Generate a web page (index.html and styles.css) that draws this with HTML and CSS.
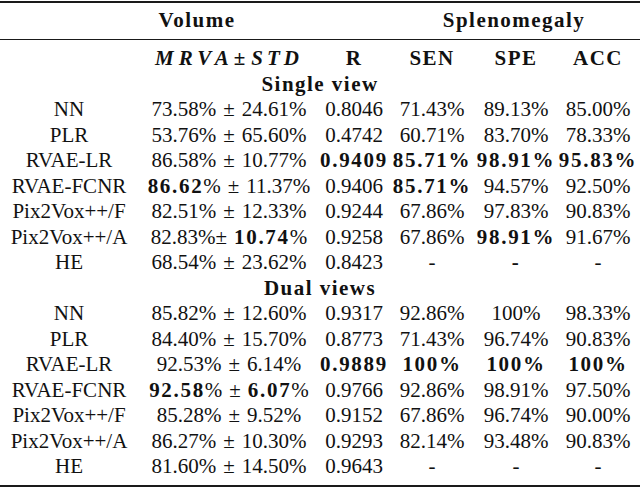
FILE: index.html
```html
<!DOCTYPE html>
<html lang="en">
<head>
<meta charset="utf-8">
<title>Volume and Splenomegaly results</title>
<link rel="stylesheet" href="styles.css">
</head>
<body>
<table class="results">
  <colgroup>
    <col class="c-method">
    <col class="c-vol">
    <col class="c-r">
    <col class="c-sen">
    <col class="c-spe">
    <col class="c-acc">
  </colgroup>
  <thead>
    <tr class="group">
      <th colspan="3" class="vol-head">Volume</th>
      <th colspan="3">Splenomegaly</th>
    </tr>
    <tr class="metrics">
      <th></th>
      <th class="mrva"><span class="mi1">MRVA</span><span class="pm">±</span><span class="mi2">STD</span></th>
      <th>R</th>
      <th>SEN</th>
      <th>SPE</th>
      <th>ACC</th>
    </tr>
  </thead>
  <tbody>
    <tr class="section"><th colspan="6">Single view</th></tr>
    <tr><td>NN</td><td>73.58%<span class="pm">±</span>24.61%</td><td>0.8046</td><td>71.43%</td><td>89.13%</td><td>85.00%</td></tr>
    <tr><td>PLR</td><td>53.76%<span class="pm">±</span>65.60%</td><td>0.4742</td><td>60.71%</td><td>83.70%</td><td>78.33%</td></tr>
    <tr><td>RVAE-LR</td><td>86.58%<span class="pm">±</span>10.77%</td><td><span class="b">0.9409</span></td><td><span class="b">85.71%</span></td><td><span class="b">98.91%</span></td><td><span class="b">95.83%</span></td></tr>
    <tr><td>RVAE-FCNR</td><td><span class="b">86.62</span>%<span class="pm">±</span>11.37%</td><td>0.9406</td><td><span class="b">85.71%</span></td><td>94.57%</td><td>92.50%</td></tr>
    <tr><td>Pix2Vox++/F</td><td>82.51%<span class="pm">±</span>12.33%</td><td>0.9244</td><td>67.86%</td><td>97.83%</td><td>90.83%</td></tr>
    <tr><td>Pix2Vox++/A</td><td>82.83%<span class="pm tight">±</span><span class="b">10.74</span>%</td><td>0.9258</td><td>67.86%</td><td><span class="b">98.91%</span></td><td>91.67%</td></tr>
    <tr><td>HE</td><td>68.54%<span class="pm">±</span>23.62%</td><td>0.8423</td><td>-</td><td><span class="b">-</span></td><td>-</td></tr>
    <tr class="section"><th colspan="6">Dual views</th></tr>
    <tr><td>NN</td><td>85.82%<span class="pm">±</span>12.60%</td><td>0.9317</td><td>92.86%</td><td>100%</td><td>98.33%</td></tr>
    <tr><td>PLR</td><td>84.40%<span class="pm">±</span>15.70%</td><td>0.8773</td><td>71.43%</td><td>96.74%</td><td>90.83%</td></tr>
    <tr><td>RVAE-LR</td><td>92.53%<span class="pm">±</span>6.14%</td><td><span class="b">0.9889</span></td><td><span class="b">100%</span></td><td><span class="b">100%</span></td><td><span class="b">100%</span></td></tr>
    <tr><td>RVAE-FCNR</td><td><span class="b">92.58</span>%<span class="pm">±</span><span class="b">6.07</span>%</td><td>0.9766</td><td>92.86%</td><td>98.91%</td><td>97.50%</td></tr>
    <tr><td>Pix2Vox++/F</td><td>85.28%<span class="pm">±</span>9.52%</td><td>0.9152</td><td>67.86%</td><td>96.74%</td><td>90.00%</td></tr>
    <tr><td>Pix2Vox++/A</td><td>86.27%<span class="pm">±</span>10.30%</td><td>0.9293</td><td>82.14%</td><td>93.48%</td><td>90.83%</td></tr>
    <tr class="last"><td>HE</td><td>81.60%<span class="pm">±</span>14.50%</td><td>0.9643</td><td>-</td><td>-</td><td>-</td></tr>
  </tbody>
</table>
</body>
</html>
```
FILE: styles.css
```css
html, body {
  margin: 0;
  padding: 0;
  background: #ffffff;
}

body {
  font-family: "Liberation Serif", "DejaVu Serif", serif;
  font-size: 21px;
  color: #111111;
}

.results {
  width: 640px;
  margin-top: 1px;
  table-layout: fixed;
  border-collapse: separate;
  border-spacing: 0;
  border-top: 2px solid #1a1a1a;
  border-bottom: 2px solid #1a1a1a;
}

.c-method { width: 138px; }
.c-vol { width: 182px; }
.c-r { width: 68px; }
.c-sen { width: 88px; }
.c-spe { width: 80px; }
.c-acc { width: 84px; }

.results th,
.results td {
  padding: 0;
  text-align: center;
  vertical-align: top;
  white-space: nowrap;
  line-height: 25.5px;
  font-weight: normal;
}

.results th {
  font-weight: bold;
  letter-spacing: 0.07em;
}

.group th {
  padding: 5px 0 5.5px;
  border-bottom: 1px solid #1a1a1a;
}

.group .vol-head {
  padding-left: 6px;
}

.metrics th {
  padding-top: 6px;
}

.mrva {
  font-style: italic;
}

.mrva .mi1 {
  letter-spacing: 5px;
}

.mrva .mi2 {
  letter-spacing: 4px;
}

.mrva .pm {
  margin: 0 6px 0 0;
  font-style: normal;
  letter-spacing: 0;
}

.pm {
  margin: 0 7px;
}

.pm.tight {
  margin-left: 0;
}

.b {
  font-weight: bold;
  letter-spacing: 0.08em;
}

.last td {
  padding-bottom: 5px;
}
```
